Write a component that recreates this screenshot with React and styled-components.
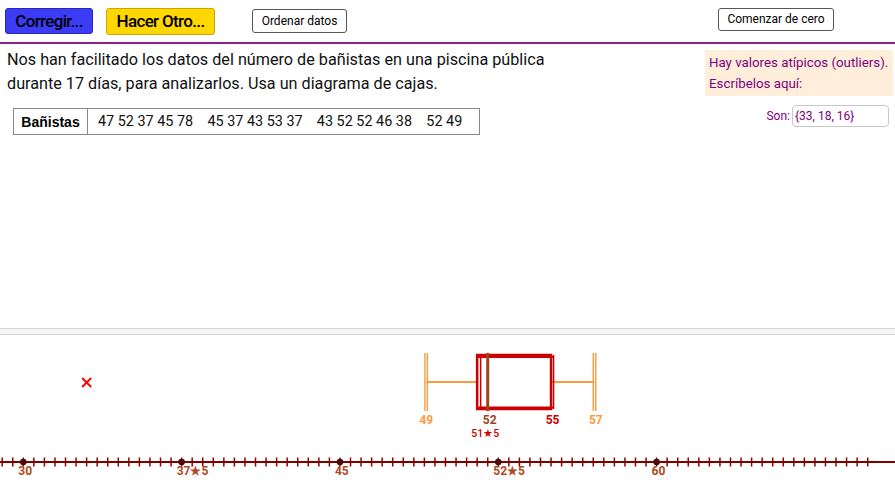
import React from "react";
import styled, { createGlobalStyle } from "styled-components";

const Global = createGlobalStyle`
  html, body { margin: 0; padding: 0; background: #fff; overflow: hidden; }
  body { font-family: Roboto, "Liberation Sans", sans-serif; }
`;

const Page = styled.div`
  width: 895px;
  height: 485px;
  display: flex;
  flex-direction: column;
  background: #fff;
`;

const Toolbar = styled.div`
  height: 42px;
  display: flex;
  align-items: center;
  padding-left: 5px;
  border-bottom: 2px solid #8e1f8e;
  box-sizing: content-box;
`;

const ActionButton = styled.button`
  margin-left: ${(p) => p.$ml || 0}px;
  width: ${(p) => p.$w}px;
  height: ${(p) => p.$h}px;
  padding: 0;
  background: ${(p) => p.$bg};
  border: 1px solid ${(p) => p.$border};
  border-radius: 3px;
  font-family: Roboto, "Liberation Sans", sans-serif;
  font-weight: 500;
  font-size: 17px;
  letter-spacing: -0.65px;
  color: #000;
  line-height: 1;
  cursor: pointer;
`;

const PlainButton = styled.button`
  margin-left: ${(p) => p.$ml || 0}px;
  margin-top: ${(p) => p.$mt || 0}px;
  width: ${(p) => p.$w}px;
  height: ${(p) => p.$h}px;
  padding: 0;
  background: #fff;
  border: 1.5px solid #555;
  border-radius: 3px;
  font-family: Roboto, "Liberation Sans", sans-serif;
  font-size: 12px;
  color: #000;
  line-height: 1;
`;

const Main = styled.div`
  height: 284px;
  display: flex;
  justify-content: space-between;
`;

const LeftCol = styled.div`
  padding: 4px 0 0 7px;
`;

const Statement = styled.p`
  margin: 0;
  font-size: 16.2px;
  line-height: 24px;
  color: #111;
`;

const DataTable = styled.table`
  margin: 12px 0 0 6px;
  border-collapse: collapse;
  width: 467px;
  height: 27px;
`;

const HeadCell = styled.th`
  width: 73px;
  border: 1px solid #8a8a8a;
  font-family: "Liberation Sans", Arial, sans-serif;
  font-weight: 700;
  font-size: 14px;
  padding: 0;
  text-align: center;
  color: #000;
`;

const ValueCell = styled.td`
  border: 1px solid #8a8a8a;
  font-size: 14.4px;
  padding: 0 0 0 10px;
  color: #111;
  white-space: pre;
`;

const RightCol = styled.div`
  width: 188px;
  margin-right: 2px;
  padding-top: 6px;
  display: flex;
  flex-direction: column;
  align-items: flex-end;
`;

const Notice = styled.div`
  width: 188px;
  box-sizing: border-box;
  background: #ffeed9;
  color: #800080;
  font-size: 13.3px;
  line-height: 21px;
  padding: 2px 0 2px 4px;
  white-space: nowrap;
`;

const AnswerRow = styled.div`
  margin-top: 9px;
  margin-right: 4px;
  display: flex;
  align-items: center;
  gap: 2px;
  color: #800080;
  font-size: 12px;
`;

const AnswerBox = styled.div`
  width: 93px;
  height: 20px;
  border: 1px solid #c8c8c8;
  border-radius: 4px;
  display: flex;
  align-items: center;
  padding-left: 2px;
  color: #800080;
  font-size: 12px;
`;

const Divider = styled.div`
  height: 5px;
  background: #f5f5f5;
  border-top: 1px solid #d5d5d5;
  border-bottom: 1px solid #d5d5d5;
`;

const ChartArea = styled.svg`
  display: block;
  width: 895px;
  flex: 1;
`;

const X0 = 23.3;
const U = 21.11;
const xv = (v) => X0 + (v - 30) * U;

const ticks = [];
for (let v = 29; v <= 70; v += 0.5) ticks.push(v);

const marks = [
  { v: 30, label: "30" },
  { v: 37.5, label: "37★5" },
  { v: 45, label: "45" },
  { v: 52.5, label: "52★5" },
  { v: 60, label: "60" },
];

const stats = { min: 49, q1: 51.5, med: 52, q3: 55, max: 57, outlier: 33 };

function BoxPlot() {
  const { min, q1, med, q3, max, outlier } = stats;
  const top = 355;
  const bot = 409;
  const mid = 382;
  const orange = "#ff9a3c";
  const red = "#cc0000";
  const brown = "#a0421e";
  const ox = xv(outlier);
  return (
    <ChartArea viewBox="0 335 895 150">
      <g stroke="#ff0000" strokeWidth="2">
        <line x1={ox - 4.5} y1={378} x2={ox + 4.5} y2={387} />
        <line x1={ox - 4.5} y1={387} x2={ox + 4.5} y2={378} />
      </g>
      <g stroke={orange}>
        <line x1={xv(min) + 2} y1={mid} x2={xv(q1)} y2={mid} strokeWidth="2" />
        <line x1={xv(q3)} y1={mid} x2={xv(max) + 1} y2={mid} strokeWidth="2" />
        <line x1={xv(min) + 0.5} y1={353} x2={xv(min) + 0.5} y2={411} strokeWidth="1.4" />
        <line x1={xv(min) + 3} y1={353} x2={xv(min) + 3} y2={411} strokeWidth="1.4" />
        <line x1={xv(max)} y1={353} x2={xv(max)} y2={411} strokeWidth="1.4" />
        <line x1={xv(max) + 2.5} y1={353} x2={xv(max) + 2.5} y2={411} strokeWidth="1.4" />
      </g>
      <g fill="none" stroke={red}>
        <rect x={xv(q1)} y={top} width={xv(q3) - xv(q1)} height={bot - top} strokeWidth="2.5" />
        <line x1={xv(q1) + 3.5} y1={top} x2={xv(q1) + 3.5} y2={bot} strokeWidth="1.5" />
        <line x1={xv(q3) + 2.5} y1={top} x2={xv(q3) + 2.5} y2={bot} strokeWidth="1.5" />
        <line x1={xv(q1)} y1={top + 2} x2={xv(q3) + 2.5} y2={top + 2} strokeWidth="2" />
        <line x1={xv(q1)} y1={bot - 1.5} x2={xv(q3) + 2.5} y2={bot - 1.5} strokeWidth="2" />
      </g>
      <line x1={xv(med)} y1={353} x2={xv(med)} y2={411} stroke={brown} strokeWidth="3" />
      <g fontFamily="Roboto, 'Liberation Sans', sans-serif" fontWeight="700" fontSize="12" textAnchor="middle">
        <text x={xv(min) + 2} y={424} fill={orange}>49</text>
        <text x={xv(med) + 2} y={424} fill={brown}>52</text>
        <text x={xv(q3) + 1.5} y={424} fill={red}>55</text>
        <text x={xv(max) + 2.5} y={424} fill={orange}>57</text>
        <text x={xv(q1) + 8} y={437} fill={red} fontSize="10.5" fontWeight="500">51★5</text>
      </g>
      <line x1="0" y1="462" x2="895" y2="462" stroke="#800000" strokeWidth="2" />
      <g stroke="#8b0000" strokeWidth="1.5">
        {ticks.map((v) => (
          <line key={v} x1={xv(v)} y1={457.5} x2={xv(v)} y2={466.5} />
        ))}
      </g>
      {marks.map((m) => (
        <g key={m.v}>
          <circle cx={xv(m.v)} cy={462} r={3.3} fill="#4a0a0a" />
          <text
            x={xv(m.v) - 5}
            y={475}
            fill="#b04a1e"
            fontFamily="Roboto, 'Liberation Sans', sans-serif"
            fontWeight="700"
            fontSize="12"
          >
            {m.label}
          </text>
        </g>
      ))}
    </ChartArea>
  );
}

export default function App() {
  return (
    <Page>
      <Global />
      <Toolbar>
        <ActionButton $bg="#3c3cf7" $border="#2a2ab0" $w={88} $h={26}>
          Corregir...
        </ActionButton>
        <ActionButton $ml={13} $bg="#ffd700" $border="#c8a800" $w={109} $h={27}>
          Hacer Otro...
        </ActionButton>
        <PlainButton $ml={37} $w={95} $h={24}>
          Ordenar datos
        </PlainButton>
        <PlainButton $ml={371} $mt={-4} $w={116} $h={23}>
          Comenzar de cero
        </PlainButton>
      </Toolbar>
      <Main>
        <LeftCol>
          <Statement>
            Nos han facilitado los datos del número de bañistas en una piscina pública
            <br />
            durante 17 días, para analizarlos. Usa un diagrama de cajas.
          </Statement>
          <DataTable>
            <tbody>
              <tr>
                <HeadCell>Bañistas</HeadCell>
                <ValueCell>{"47 52 37 45 78    45 37 43 53 37    43 52 52 46 38    52 49"}</ValueCell>
              </tr>
            </tbody>
          </DataTable>
        </LeftCol>
        <RightCol>
          <Notice>
            Hay valores atípicos (outliers).
            <br />
            Escríbelos aquí:
          </Notice>
          <AnswerRow>
            Son:
            <AnswerBox>{"{33, 18, 16}"}</AnswerBox>
          </AnswerRow>
        </RightCol>
      </Main>
      <Divider />
      <BoxPlot />
    </Page>
  );
}
